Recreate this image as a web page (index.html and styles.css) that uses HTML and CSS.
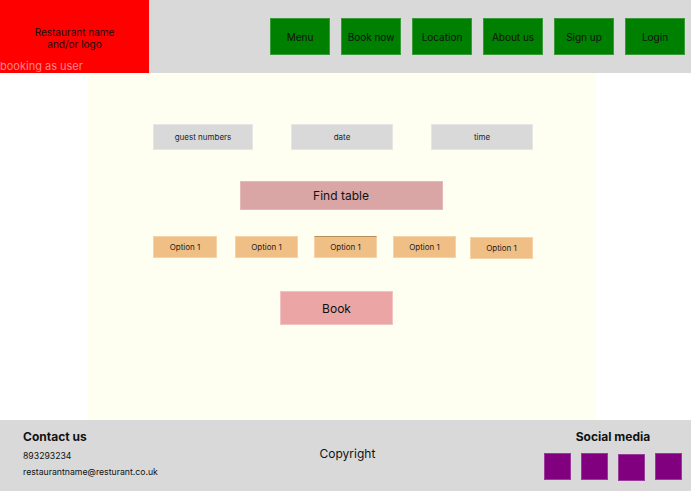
FILE: index.html
```html
<!DOCTYPE html>
<html lang="en">
<head>
    <meta charset="UTF-8">
    <meta name="viewport" content="width=device-width, initial-scale=1.0">
    <title>Book a table</title>
    <link rel="stylesheet" href="styles.css">
</head>
<body>
    <header class="header">
        <div class="logo">
            <div class="logo-name">Restaurant name<br>and/or logo</div>
            <div class="user-state">booking as user</div>
        </div>
        <nav class="nav">
            <button>Menu</button>
            <button>Book now</button>
            <button>Location</button>
            <button>About us</button>
            <button>Sign up</button>
            <button>Login</button>
        </nav>
    </header>

    <main class="booking">
        <div class="fields">
            <div class="field field-guests">guest numbers</div>
            <div class="field">date</div>
            <div class="field">time</div>
        </div>

        <button class="find-btn">Find table</button>

        <div class="options">
            <div class="option first">Option 1</div>
            <div class="option second">Option 1</div>
            <div class="option selected">Option 1</div>
            <div class="option">Option 1</div>
            <div class="option last">Option 1</div>
        </div>

        <button class="book-btn">Book</button>
    </main>

    <footer class="footer">
        <div class="contact">
            <h3>Contact us</h3>
            <p>893293234</p>
            <p>restaurantname@resturant.co.uk</p>
        </div>
        <div class="copyright">Copyright</div>
        <div class="social">
            <h3>Social media</h3>
            <div class="social-icons">
                <span></span>
                <span></span>
                <span class="low"></span>
                <span></span>
            </div>
        </div>
    </footer>
</body>
</html>
```

FILE: styles.css
```css
* {
    box-sizing: border-box;
}
body {
    margin: 0;
    font-family: Inter, "Noto Sans", sans-serif;
    color: #111;
    background: #fff;
}
.header {
    display: flex;
    justify-content: space-between;
    height: 73px;
    background: #d9d9d9;
}
.logo {
    width: 149px;
    background: #ff0000;
    display: flex;
    flex-direction: column;
    padding-top: 26px;
}
.logo-name {
    text-align: center;
    font-size: 10px;
    line-height: 12px;
    color: #111;
}
.user-state {
    margin-top: auto;
    font-size: 11px;
    line-height: 13px;
    color: #ff8585;
}
.nav {
    display: flex;
    gap: 11px;
    padding: 18px 6px 0 0;
}
.nav button {
    width: 60px;
    height: 37px;
    background: #008000;
    border: 1px solid #3a9a3a;
    font-family: inherit;
    font-size: 10px;
    color: #111;
    padding: 0;
}
.booking {
    width: 508px;
    height: 347px;
    margin-left: 88px;
    background: #fefff0;
    padding-top: 51px;
    display: flex;
    flex-direction: column;
    align-items: center;
}
.fields {
    display: flex;
    gap: 38px;
    align-self: flex-start;
    padding-left: 65px;
}
.field {
    width: 102px;
    height: 26px;
    background: #d9d9d9;
    border: 1px solid #e6e6e6;
    font-size: 8px;
    display: flex;
    align-items: center;
    justify-content: center;
    color: #222;
}
.field-guests {
    width: 100px;
}
.find-btn {
    width: 203px;
    height: 29px;
    margin-top: 31px;
    margin-right: 2px;
    background: #d9a5a5;
    border: 1px solid #e3b8b8;
    font-family: inherit;
    font-size: 12px;
    color: #111;
}
.options {
    display: flex;
    gap: 16px;
    align-self: flex-start;
    margin-left: 65px;
    margin-top: 26px;
}
.option {
    width: 63px;
    height: 22px;
    background: #f0bf85;
    border: 1px solid #f6d2a8;
    font-size: 8px;
    display: flex;
    align-items: center;
    justify-content: center;
    color: #222;
}
.option.first {
    width: 64px;
}
.option.second {
    margin-left: 2px;
}
.option.selected {
    border-top: 1px solid #b88d5c;
}
.option.last {
    margin-left: -2px;
    margin-top: 1px;
}
.book-btn {
    width: 113px;
    height: 34px;
    margin-top: 32px;
    margin-right: 11px;
    background: #eba5a5;
    border: 1px solid #f3c2c2;
    font-family: inherit;
    font-size: 12px;
    color: #111;
}
.footer {
    height: 71px;
    background: #d9d9d9;
    display: flex;
    justify-content: space-between;
    padding: 9px 9px 0 23px;
}
.contact h3,
.social h3 {
    margin: 0;
    font-size: 12px;
    line-height: 15px;
    font-weight: 700;
}
.contact p {
    margin: 0;
    font-size: 8.7px;
    line-height: 16px;
}
.contact p:first-of-type {
    margin-top: 4px;
}
.copyright {
    font-size: 12px;
    margin-top: 17px;
    margin-right: 7px;
}
.social {
    display: flex;
    flex-direction: column;
    align-items: center;
}
.social-icons {
    display: flex;
    gap: 10px;
    margin-top: 9px;
}
.social-icons span {
    width: 27px;
    height: 27px;
    background: #800080;
    border: 1px solid #9a3a9a;
}
.social-icons span.low {
    margin-top: 1px;
}
```
